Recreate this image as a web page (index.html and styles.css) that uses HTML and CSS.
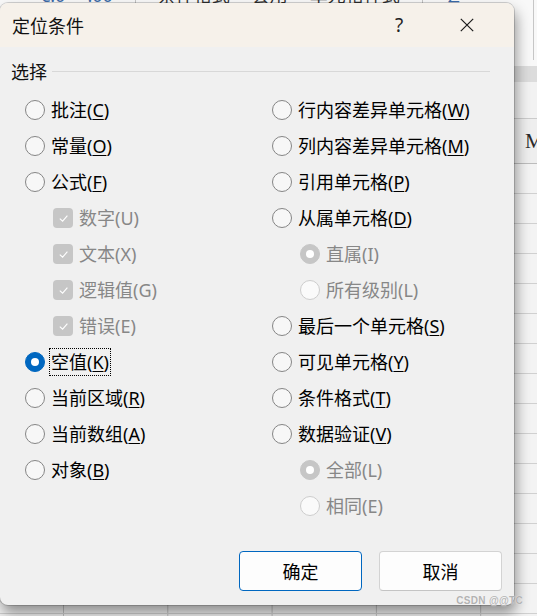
FILE: index.html
```html
<!DOCTYPE html>
<html lang="zh-CN">
<head>
<meta charset="utf-8">
<title>定位条件</title>
<link rel="stylesheet" href="styles.css">
</head>
<body>
<div class="sheet">
  <div class="ribbon">
    <div class="rb-group">
      <span class="rb-num">€.0</span><span class="rb-num">.00</span>
      <span class="rb-sep"></span>
      <span>条件格式</span>
      <span>套用</span>
      <span>单元格样式</span>
      <span class="rb-sep"></span>
      <span class="rb-num">∑</span>
    </div>
    <span class="rb-vline"></span>
  </div>
  <div class="band"></div>
  <div class="fbar"></div>
  <div class="colhead"><span class="col-m">M</span></div>
  <div class="grid"></div>
</div>

<div class="dialog">
  <div class="titlebar">
    <span class="title-text">定位条件</span>
    <span class="help">?</span>
    <span class="close">
      <svg width="14" height="14" viewBox="0 0 14 14"><path d="M0.8 0.8 L13.2 13.2 M13.2 0.8 L0.8 13.2" stroke="#1c1c1c" stroke-width="1.2" fill="none"/></svg>
    </span>
  </div>
  <div class="body">
    <div class="legend"><span class="legend-text">选择</span><span class="legend-line"></span></div>
    <div class="options">
      <div class="col col-left">
        <div class="opt"><span class="radio"></span><span class="lbl">批注(<u>C</u>)</span></div>
        <div class="opt"><span class="radio"></span><span class="lbl">常量(<u>O</u>)</span></div>
        <div class="opt"><span class="radio"></span><span class="lbl">公式(<u>F</u>)</span></div>
        <div class="opt sub dis"><span class="check"><svg width="20" height="20" viewBox="0 0 20 20"><path d="M6.8 10.6 L9.6 13.2 L14.4 7.6" stroke="#fff" stroke-width="1.1" fill="none"/></svg></span><span class="lbl">数字(U)</span></div>
        <div class="opt sub dis"><span class="check"><svg width="20" height="20" viewBox="0 0 20 20"><path d="M6.8 10.6 L9.6 13.2 L14.4 7.6" stroke="#fff" stroke-width="1.1" fill="none"/></svg></span><span class="lbl">文本(X)</span></div>
        <div class="opt sub dis"><span class="check"><svg width="20" height="20" viewBox="0 0 20 20"><path d="M6.8 10.6 L9.6 13.2 L14.4 7.6" stroke="#fff" stroke-width="1.1" fill="none"/></svg></span><span class="lbl">逻辑值(G)</span></div>
        <div class="opt sub dis"><span class="check"><svg width="20" height="20" viewBox="0 0 20 20"><path d="M6.8 10.6 L9.6 13.2 L14.4 7.6" stroke="#fff" stroke-width="1.1" fill="none"/></svg></span><span class="lbl">错误(E)</span></div>
        <div class="opt"><span class="radio on"></span><span class="lbl focus">空值(<u>K</u>)</span></div>
        <div class="opt"><span class="radio"></span><span class="lbl">当前区域(<u>R</u>)</span></div>
        <div class="opt"><span class="radio"></span><span class="lbl">当前数组(<u>A</u>)</span></div>
        <div class="opt"><span class="radio"></span><span class="lbl">对象(<u>B</u>)</span></div>
      </div>
      <div class="col col-right">
        <div class="opt"><span class="radio"></span><span class="lbl">行内容差异单元格(<u>W</u>)</span></div>
        <div class="opt"><span class="radio"></span><span class="lbl">列内容差异单元格(<u>M</u>)</span></div>
        <div class="opt"><span class="radio"></span><span class="lbl">引用单元格(<u>P</u>)</span></div>
        <div class="opt"><span class="radio"></span><span class="lbl">从属单元格(<u>D</u>)</span></div>
        <div class="opt sub dis"><span class="radio on"></span><span class="lbl">直属(I)</span></div>
        <div class="opt sub dis"><span class="radio"></span><span class="lbl">所有级别(L)</span></div>
        <div class="opt"><span class="radio"></span><span class="lbl">最后一个单元格(<u>S</u>)</span></div>
        <div class="opt"><span class="radio"></span><span class="lbl">可见单元格(<u>Y</u>)</span></div>
        <div class="opt"><span class="radio"></span><span class="lbl">条件格式(<u>T</u>)</span></div>
        <div class="opt"><span class="radio"></span><span class="lbl">数据验证(<u>V</u>)</span></div>
        <div class="opt sub dis"><span class="radio on"></span><span class="lbl">全部(L)</span></div>
        <div class="opt sub dis"><span class="radio"></span><span class="lbl">相同(E)</span></div>
      </div>
    </div>
    <div class="buttons">
      <button class="btn primary">确定</button>
      <button class="btn">取消</button>
    </div>
  </div>
</div>

<div class="watermark">CSDN @@TC</div>
</body>
</html>
```

FILE: styles.css
```css
html, body {
  margin: 0;
  padding: 0;
}
body {
  width: 537px;
  height: 616px;
  overflow: hidden;
  position: relative;
  font-family: "Noto Sans", "Noto Sans CJK SC", sans-serif;
  background: #f6f6f6;
}

/* ---------- Excel behind ---------- */
.sheet {
  display: flex;
  flex-direction: column;
  height: 616px;
}
.ribbon {
  height: 66px;
  flex-shrink: 0;
  background: #f8f8f8;
  display: flex;
  align-items: flex-start;
  overflow: hidden;
}
.rb-group {
  margin-top: -16px;
  padding-left: 40px;
  display: flex;
  align-items: center;
  gap: 22px;
  font-size: 18px;
  line-height: 20px;
  color: #333;
}
.rb-num { color: #3a6aa8; }
.rb-sep {
  width: 1px;
  height: 22px;
  background: #c4c4c4;
}
.rb-vline {
  margin-left: auto;
  margin-right: 3px;
  width: 1px;
  height: 60px;
  background: #c6c6c6;
}
.band {
  height: 16px;
  flex-shrink: 0;
  background: #dcdcdc;
}
.fbar {
  height: 36px;
  flex-shrink: 0;
  background: #f2f2f2;
  border-bottom: 1px solid #cbcbcb;
}
.colhead {
  height: 44px;
  flex-shrink: 0;
  background: #eeeeee;
  border-bottom: 1px solid #bcbcbc;
  display: flex;
  align-items: center;
}
.col-m {
  padding-left: 525px;
  font-family: "Liberation Serif", serif;
  font-size: 21px;
  color: #2a2a2a;
}
.grid {
  flex: 1;
  background-color: #f3f3f3;
  background-image:
    linear-gradient(to bottom, #d0d0d0 1px, transparent 1px),
    linear-gradient(to right, #c2c2c2 1px, transparent 1px);
  background-size: 100% 30px, 104.3px 100%;
  background-position: 0 29px, 63px 0;
}

/* ---------- dialog ---------- */
.dialog {
  position: absolute;
  left: 0;
  top: 3px;
  width: 514px;
  height: 602px;
  background: #f0f0f0;
  border-radius: 8px;
  overflow: hidden;
  display: flex;
  flex-direction: column;
  box-shadow: 0 0 0 1px rgba(0, 0, 0, 0.16), 2px 8px 14px rgba(0, 0, 0, 0.42);
}
.titlebar {
  height: 44px;
  flex-shrink: 0;
  background: #f6f1ea;
  display: flex;
  align-items: center;
  padding-left: 12px;
  font-family: "Noto Sans CJK SC", sans-serif;
  font-size: 18px;
  line-height: 24px;
  color: #111;
}
.title-text { flex: 1; }
.help {
  width: 20px;
  text-align: center;
  font-family: "Noto Sans", sans-serif;
  font-size: 19px;
  color: #222;
}
.close {
  width: 20px;
  height: 20px;
  margin-left: 48px;
  margin-right: 37px;
  display: flex;
  align-items: center;
  justify-content: center;
}

.body {
  flex: 1;
  display: flex;
  flex-direction: column;
  padding: 13px 24px 14px 11px;
}
.legend {
  display: flex;
  align-items: center;
  height: 24px;
  font-size: 18px;
  line-height: 24px;
  color: #111;
}
.legend-line {
  flex: 1;
  height: 1px;
  margin-left: 5px;
  margin-top: -1px;
  background: #d8d8d8;
}
.options {
  display: flex;
  margin-top: 8px;
  padding-left: 14px;
}
.col {
  display: flex;
  flex-direction: column;
}
.col-left { width: 247px; }

.opt {
  display: flex;
  align-items: center;
  height: 36px;
}
.opt.sub { padding-left: 28px; }

.lbl {
  font-size: 18px;
  line-height: 24px;
  color: #000;
  white-space: nowrap;
}
.lbl u {
  text-decoration: underline;
  text-decoration-thickness: 1px;
  text-underline-offset: 2px;
}
.dis .lbl { color: #878787; }
.focus {
  outline: 1px dotted #000;
  outline-offset: 1px;
}

.radio {
  width: 20px;
  height: 20px;
  box-sizing: border-box;
  border-radius: 50%;
  border: 1px solid #858585;
  background: #f7f7f7;
  margin-right: 6px;
  flex-shrink: 0;
  display: flex;
  align-items: center;
  justify-content: center;
}
.radio.on {
  background: #0067c0;
  border-color: #0067c0;
}
.radio.on::after {
  content: "";
  width: 8px;
  height: 8px;
  border-radius: 50%;
  background: #fff;
}
.dis .radio {
  border-color: #cdcdcd;
  background: #fafafa;
}
.dis .radio.on {
  background: #c6c6c6;
  border-color: #c6c6c6;
}

.check {
  width: 20px;
  height: 20px;
  border-radius: 4px;
  background: #c6c6c6;
  margin-right: 6px;
  flex-shrink: 0;
  display: flex;
}

.buttons {
  margin-top: auto;
  margin-right: -12px;
  display: flex;
  justify-content: flex-end;
  gap: 17px;
}
.btn {
  width: 123px;
  height: 40px;
  box-sizing: border-box;
  background: #fdfdfd;
  border: 1px solid #d3d3d3;
  border-bottom-color: #c4c4c4;
  border-radius: 4px;
  font-family: "Noto Sans CJK SC", sans-serif;
  font-size: 18px;
  line-height: 24px;
  color: #000;
  padding: 0;
}
.btn.primary {
  border: 1px solid #0067c0;
}

.watermark {
  position: absolute;
  right: 14px;
  top: 595px;
  white-space: nowrap;
  font-family: "Liberation Sans", sans-serif;
  font-size: 10px;
  font-weight: bold;
  letter-spacing: 0.3px;
  color: #b2b2b2;
  text-shadow: 0 0 1px #fff;
}
```
